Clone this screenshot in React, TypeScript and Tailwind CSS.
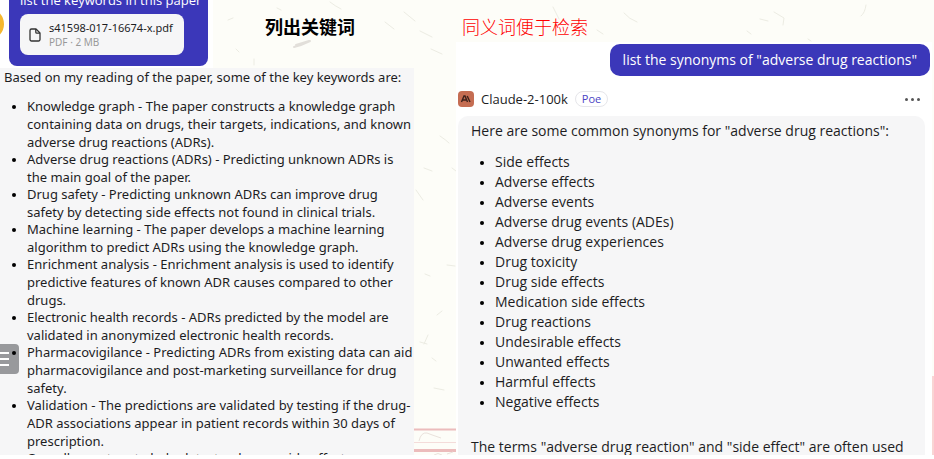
import React from "react";

const keywords: string[][] = [
  [
    "Knowledge graph - The paper constructs a knowledge graph",
    "containing data on drugs, their targets, indications, and known",
    "adverse drug reactions (ADRs).",
  ],
  ["Adverse drug reactions (ADRs) - Predicting unknown ADRs is", "the main goal of the paper."],
  [
    "Drug safety - Predicting unknown ADRs can improve drug",
    "safety by detecting side effects not found in clinical trials.",
  ],
  [
    "Machine learning - The paper develops a machine learning",
    "algorithm to predict ADRs using the knowledge graph.",
  ],
  [
    "Enrichment analysis - Enrichment analysis is used to identify",
    "predictive features of known ADR causes compared to other",
    "drugs.",
  ],
  [
    "Electronic health records - ADRs predicted by the model are",
    "validated in anonymized electronic health records.",
  ],
  [
    "Pharmacovigilance - Predicting ADRs from existing data can aid",
    "pharmacovigilance and post-marketing surveillance for drug",
    "safety.",
  ],
  [
    "Validation - The predictions are validated by testing if the drug-",
    "ADR associations appear in patient records within 30 days of",
    "prescription.",
  ],
  ["Overall, a system to help detect unknown side effects"],
];

const synonyms = [
  "Side effects",
  "Adverse effects",
  "Adverse events",
  "Adverse drug events (ADEs)",
  "Adverse drug experiences",
  "Drug toxicity",
  "Drug side effects",
  "Medication side effects",
  "Drug reactions",
  "Undesirable effects",
  "Unwanted effects",
  "Harmful effects",
  "Negative effects",
];

function PaperTexture() {
  return (
    <svg
      className="absolute inset-0 h-full w-full"
      viewBox="0 0 934 455"
      preserveAspectRatio="none"
      aria-hidden="true"
    >
      <g fill="none" stroke="#ecece3" strokeWidth="1" strokeLinecap="round">
        <path d="M294 47q8-2 16-6M296 45l13-4" stroke="#e2dfda" strokeWidth="2" />
        <path d="M254 59v6M277 8l4 2M330 2q5 4 11 7M404 12l11 9M420 31l12 6M431 49l11 5M385 22l9 7" />
        <path d="M553 7l6 12M624 13q5 6 13 9M597 30l6 4M866 5q-1 8-5 11M774 12l10 6-1 7M760 19l8 2M747 31l4 3M808 39l3 2" />
        <path d="M440 136q6 4 9 7M424 168l8 3M452 168l4 3M416 190l7 10M447 265l8 1M425 274l5 2" />
        <path d="M437 315l5-4M428 335l-4 9M420 342l7 2M434 388l10 2M432 358l4 3M228 20l5-2M236 49l3 3" />
      </g>
      <g fill="none" stroke="#ecbcbc">
        <path d="M414 429.500H456" strokeWidth="2" />
        <path d="M414 442.500H456" strokeWidth="1" stroke="#f4dcda" />
        <path d="M414 450.500H456" strokeWidth="3" />
        <path d="M419 441q2-9 8-8q5 2 14 5M434 455q4-3 8 0M447 454l6-2" stroke="#eae2dc" />
      </g>
      <path d="M931 376h3v79h-3z" fill="#f9d5d4" />
    </svg>
  );
}

function FileIcon() {
  return (
    <svg className="h-4 w-3 shrink-0" viewBox="0 0 12 16" fill="none" stroke="#333" strokeWidth="1.300" strokeLinejoin="round" aria-hidden="true">
      <path d="M2.500 2h4.500l4 4v6.500a1.500 1.500 0 0 1-1.500 1.500h-7a1.500 1.500 0 0 1-1.500-1.500v-9a1.500 1.500 0 0 1 1.500-1.500z" />
      <path d="M6.800 2v3.200a1 1 0 0 0 1 1h3.200" />
    </svg>
  );
}

function ClaudeLogo() {
  return (
    <svg className="size-4" viewBox="0 0 16 16" role="img" aria-label="Claude">
      <rect width="16" height="16" rx="4" fill="#c56d52" />
      <path d="M3.500 11l2.500-6h1l2.500 6M4.500 9h3.500M9.200 5l2.800 6" stroke="#3b211b" strokeWidth="1.400" fill="none" />
    </svg>
  );
}

export default function App() {
  return (
    <main className="flex h-screen flex-col overflow-hidden bg-white pb-1 font-['Open_Sans','Noto_Sans_CJK_SC',sans-serif] text-[#1d1d1f]">
      <div className="relative grid min-h-0 flex-1 grid-cols-[456fr_478fr] overflow-hidden bg-[#fdfdf8]">
        <PaperTexture />

        <section className="relative flex min-h-0 flex-col">
          <header className="flex h-[68px] shrink-0">
            <div className="relative h-[68px] w-[213px] shrink-0 overflow-hidden bg-white pl-[9px]">
              <span className="absolute top-2 -left-7 size-8 rounded-full bg-[#f5b82e]" />
              <div className="relative flex h-[66px] w-[199px] flex-col justify-end rounded-b-lg bg-[#3b37b9] px-[11px] pb-[11px]">
                <p className="mb-[5px] text-[13px] leading-[18px] whitespace-nowrap text-white">
                  list the keywords in this paper
                </p>
                <div className="flex h-[41px] w-[164px] shrink-0 items-center gap-2 rounded-lg bg-[#f6f6f7] pl-[9px]">
                  <FileIcon />
                  <div className="font-['Noto_Sans',sans-serif] whitespace-nowrap">
                    <p className="text-[11px] leading-[14px]">s41598-017-16674-x.pdf</p>
                    <p className="text-[10px] leading-[14px] text-[#999]">PDF · 2 MB</p>
                  </div>
                </div>
              </div>
            </div>
            <h2 className="ml-[52px] pt-[14px] text-[18px] leading-[26px] font-bold whitespace-nowrap text-black">
              列出关键词
            </h2>
          </header>

          <article className="relative mr-[42px] min-h-0 flex-1 overflow-hidden bg-[#f6f6f7] font-['Noto_Sans',sans-serif] text-[13px] leading-[18px] whitespace-nowrap">
            <p className="pl-1">Based on my reading of the paper, some of the key keywords are:</p>
            <button
              type="button"
              aria-label="Open outline"
              className="absolute top-[276px] left-0 flex h-[30px] w-[19px] flex-col justify-center gap-1 rounded-r bg-[#98999c]"
            >
              <span className="h-0.5 w-[9px] bg-white" />
              <span className="h-0.5 w-[9px] bg-white" />
              <span className="h-0.5 w-[9px] bg-white" />
            </button>
            <ul className="relative mt-[11px] list-disc -space-y-px pl-[27px] marker:text-[11px] marker:text-black">
              {keywords.map((lines) => (
                <li key={lines[0]}>
                  {lines.map((line) => (
                    <span key={line} className="block">
                      {line}
                    </span>
                  ))}
                </li>
              ))}
            </ul>
          </article>
        </section>

        <section className="relative flex min-h-0 flex-col">
          <h2 className="h-[42px] shrink-0 pt-[14px] pl-[6px] text-[18px] leading-[26px] font-light whitespace-nowrap text-[#ff0000]">
            同义词便于检索
          </h2>
          <div className="mr-[2px] flex min-h-0 flex-1 flex-col bg-white pt-[2px] pl-[2px]">
            <p className="mr-[2px] self-end rounded-[10px] bg-[#3b37b9] px-[13px] py-[6px] text-[14px] leading-5 whitespace-nowrap text-white">
              list the synonyms of "adverse drug reactions"
            </p>
            <div className="mt-[14px] flex h-[18px] shrink-0 items-center pr-3">
              <ClaudeLogo />
              <span className="ml-[7px] text-[13px] leading-[18px]">Claude-2-100k</span>
              <span className="ml-[7px] rounded-full border border-[#e6e6ea] px-[6px] text-[11px] leading-[14px] text-[#4a43c4]">
                Poe
              </span>
              <button type="button" aria-label="More" className="ml-auto flex gap-[3px]">
                <span className="size-[3px] rounded-full bg-[#555]" />
                <span className="size-[3px] rounded-full bg-[#555]" />
                <span className="size-[3px] rounded-full bg-[#555]" />
              </button>
            </div>
            <article className="mt-2 mr-[7px] min-h-0 flex-1 overflow-hidden rounded-t-[10px] bg-[#f6f6f7] px-[13px] pt-[5px] text-[14px] leading-5 whitespace-nowrap">
              <p>Here are some common synonyms for "adverse drug reactions":</p>
              <ul className="mt-[11px] list-disc pl-6 marker:text-[12px] marker:text-black">
                {synonyms.map((item) => (
                  <li key={item}>{item}</li>
                ))}
              </ul>
              <p className="mt-[25px]">The terms "adverse drug reaction" and "side effect" are often used</p>
            </article>
          </div>
        </section>
      </div>
    </main>
  );
}
